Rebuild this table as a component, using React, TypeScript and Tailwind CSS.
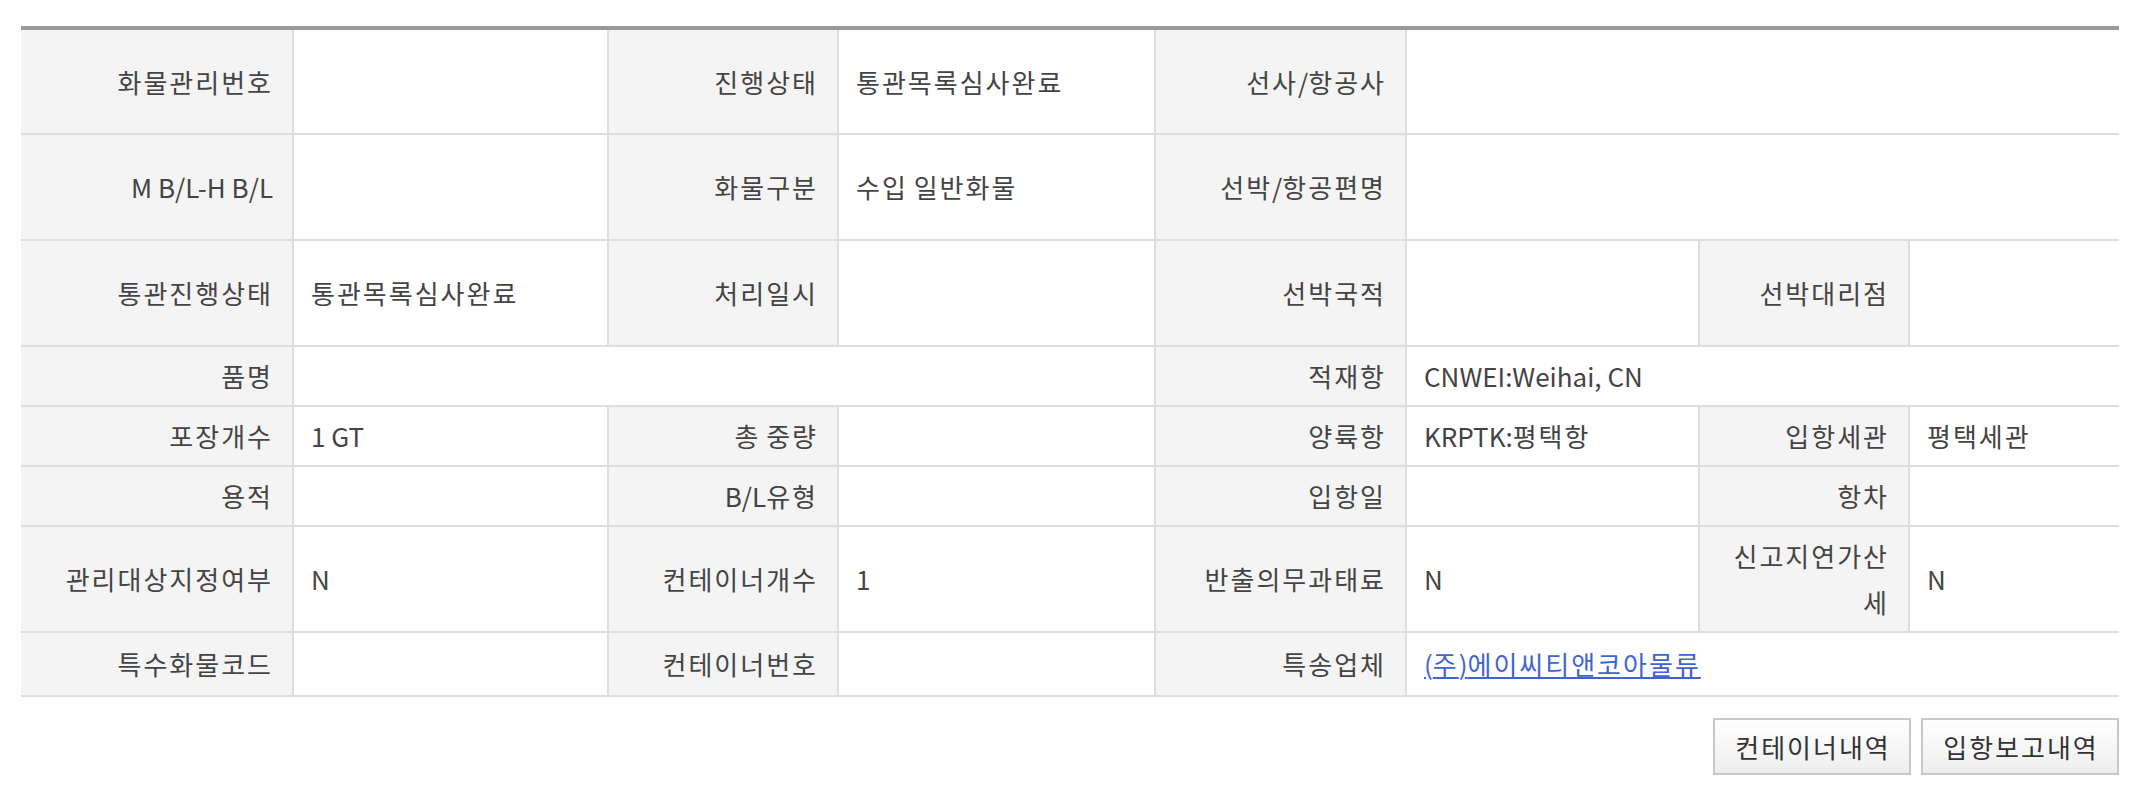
import React from "react";

type Cell = { text?: string; label?: boolean; span?: number; link?: boolean };

const COLS = [272, 315, 230, 317, 251, 293, 210, 210];

const ROWS: { h: string; cells: Cell[] }[] = [
  {
    h: "h-[106px]",
    cells: [
      { text: "화물관리번호", label: true },
      {},
      { text: "진행상태", label: true },
      { text: "통관목록심사완료" },
      { text: "선사/항공사", label: true },
      { span: 3 },
    ],
  },
  {
    h: "h-[106px]",
    cells: [
      { text: "M B/L-H B/L", label: true },
      {},
      { text: "화물구분", label: true },
      { text: "수입 일반화물" },
      { text: "선박/항공편명", label: true },
      { span: 3 },
    ],
  },
  {
    h: "h-[106px]",
    cells: [
      { text: "통관진행상태", label: true },
      { text: "통관목록심사완료" },
      { text: "처리일시", label: true },
      {},
      { text: "선박국적", label: true },
      {},
      { text: "선박대리점", label: true },
      {},
    ],
  },
  {
    h: "h-[60px]",
    cells: [
      { text: "품명", label: true },
      { span: 3 },
      { text: "적재항", label: true },
      { text: "CNWEI:Weihai, CN", span: 3 },
    ],
  },
  {
    h: "h-[60px]",
    cells: [
      { text: "포장개수", label: true },
      { text: "1 GT" },
      { text: "총 중량", label: true },
      {},
      { text: "양륙항", label: true },
      { text: "KRPTK:평택항" },
      { text: "입항세관", label: true },
      { text: "평택세관" },
    ],
  },
  {
    h: "h-[60px]",
    cells: [
      { text: "용적", label: true },
      {},
      { text: "B/L유형", label: true },
      {},
      { text: "입항일", label: true },
      {},
      { text: "항차", label: true },
      {},
    ],
  },
  {
    h: "h-[106px]",
    cells: [
      { text: "관리대상지정여부", label: true },
      { text: "N" },
      { text: "컨테이너개수", label: true },
      { text: "1" },
      { text: "반출의무과태료", label: true },
      { text: "N" },
      { text: "신고지연가산세", label: true },
      { text: "N" },
    ],
  },
  {
    h: "h-[64px]",
    cells: [
      { text: "특수화물코드", label: true },
      {},
      { text: "컨테이너번호", label: true },
      {},
      { text: "특송업체", label: true },
      { text: "(주)에이씨티앤코아물류", span: 3, link: true },
    ],
  },
];

// hangul runs get a little tracking so they take the width of the original font
function Txt({ s }: { s?: string }) {
  if (!s) return null;
  return (
    <>
      {s.split(/([가-힣]+)/).map((part, i) =>
        /[가-힣]/.test(part) ? (
          <span key={i} className="tracking-[2px]">
            {part}
          </span>
        ) : (
          part
        )
      )}
    </>
  );
}

export default function App() {
  return (
    <div
      className="min-h-[802px] bg-white pl-[21px] pt-[26px] text-[26px] leading-[46px] text-[#444]"
      style={{ fontFamily: '"Noto Sans CJK KR", "Noto Sans", sans-serif' }}
    >
      <div className="w-[2098px]">
        <table className="w-full table-fixed border-collapse border-t-4 border-t-[#999]">
          <colgroup>
            {COLS.map((w, i) => (
              <col key={i} style={{ width: w }} />
            ))}
          </colgroup>
          <tbody>
            {ROWS.map((row, r) => (
              <tr
                key={r}
                className={`${row.h} [&>td:first-child]:border-l-0 [&>td:last-child]:border-r-0`}
              >
                {row.cells.map((c, i) => (
                  <td
                    key={i}
                    colSpan={c.span}
                    className={`border-2 border-[#dedede] align-middle ${
                      c.label
                        ? "bg-[#f4f4f4] pl-[20px] pr-[19px] text-right"
                        : "bg-white pl-[17px] pr-[10px] text-left"
                    }`}
                  >
                    {c.link ? (
                      <a href="#" className="text-[#3f63d3] underline underline-offset-2">
                        <Txt s={c.text} />
                      </a>
                    ) : (
                      <Txt s={c.text} />
                    )}
                  </td>
                ))}
              </tr>
            ))}
          </tbody>
        </table>
        <div className="mt-[21px] flex justify-end gap-[10px]">
          {["컨테이너내역", "입항보고내역"].map((b) => (
            <button
              key={b}
              className="h-[57px] w-[198px] border-2 border-[#c8c8c8] bg-gradient-to-b from-white to-[#eeeeee] pl-[2px] text-[26px] leading-none text-[#333]"
            >
              <Txt s={b} />
            </button>
          ))}
        </div>
      </div>
    </div>
  );
}
